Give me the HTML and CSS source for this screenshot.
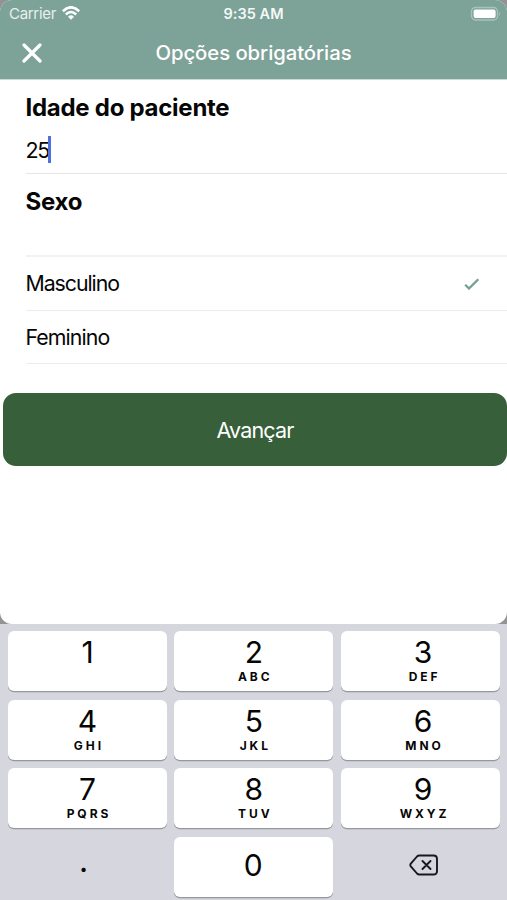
FILE: index.html
```html
<!DOCTYPE html>
<html lang="pt">
<head>
<meta charset="utf-8">
<title>Opções obrigatórias</title>
<link rel="stylesheet" href="styles.css">
</head>
<body>
<div class="screen">
  <header class="top">
    <div class="status">
      <div class="carrier"><span>Carrier</span>
        <svg class="wifi" viewBox="0 0 18 14" width="18" height="14"><g fill="none" stroke="#fff" stroke-width="2.600"><path d="M.8 5.200Q9-2.600 17.200 5.200"/><path d="M3.800 8.500Q9 3.500 14.200 8.500"/></g><path d="M6 10.700Q9 7.900 12 10.700L9 13.800Z" fill="#fff"/></svg>
      </div>
      <span class="time">9:35 AM</span>
      <svg class="battery" viewBox="0 0 32 16" width="32" height="16"><rect x="1.500" y="1.500" width="26" height="12.500" rx="4" fill="none" stroke="#a9c3bb" stroke-width="1.300"/><rect x="3.600" y="3.500" width="22" height="8.500" rx="2" fill="#fff"/><path d="M29.200 5.700q2 2 0 4z" fill="#a9c3bb"/></svg>
    </div>
    <div class="nav">
      <svg class="close" viewBox="0 0 20 20" width="20" height="20"><path d="M2 2 18 18M18 2 2 18" stroke="#fff" stroke-width="3.200" stroke-linecap="round"/></svg>
      <h1>Opções obrigatórias</h1>
    </div>
  </header>
  <main>
    <section class="age"><h2>Idade do paciente</h2><div class="field"><span>25</span><i class="caret"></i></div></section>
    <section class="sex"><h2>Sexo</h2></section>
    <div class="option"><span class="male">Masculino</span><svg viewBox="0 0 16 14" width="16" height="14"><path d="M1.200 8.800 5 12.500 14.300 3.300" fill="none" stroke="#759f92" stroke-width="2.300"/></svg></div>
    <div class="option"><span class="female">Feminino</span></div>
    <button class="next">Avançar</button>
  </main>
</div>
<div class="keypad">
  <div class="key"><b>1</b></div>
  <div class="key"><b>2</b><small>ABC</small></div>
  <div class="key right"><b>3</b><small>DEF</small></div>
  <div class="key"><b>4</b><small>GHI</small></div>
  <div class="key"><b>5</b><small>JKL</small></div>
  <div class="key right"><b>6</b><small>MNO</small></div>
  <div class="key"><b>7</b><small>PQRS</small></div>
  <div class="key"><b>8</b><small>TUV</small></div>
  <div class="key right"><b>9</b><small>WXYZ</small></div>
  <div class="key plain dot"><b>.</b></div>
  <div class="key zero"><b>0</b></div>
  <div class="key plain"><svg viewBox="0 0 30 22" width="30" height="22"><path d="M10.200 1.500H24.500Q28 1.500 28 5V17Q28 20.500 24.500 20.500H10.200Q9 20.500 8 19.500L1.800 12.400Q.8 11 1.800 9.600L8 2.500Q9 1.500 10.200 1.500ZM13.500 7 21.500 15M21.500 7 13.500 15" fill="none" stroke="#17181b" stroke-width="1.900" stroke-linejoin="round" stroke-linecap="round"/></svg></div>
</div>
</body>
</html>
```
FILE: styles.css
```css
* { box-sizing: border-box; }
body { margin: 0; width: 507px; height: 900px; overflow: hidden; background: #939393; font-family: Inter, "Liberation Sans", sans-serif; color: #060606; }
h1, h2 { margin: 0; white-space: nowrap; }
.screen { height: 624px; background: #fff; border-radius: 12px; overflow: hidden; }
.top { height: 80px; background: #7da298; color: #fff; border-bottom: 1px solid #c9d9d5; }
.status { height: 28px; display: grid; grid-template-columns: 1fr auto 1fr; align-items: center; padding: 0 5px 0 9px; }
.carrier { display: flex; align-items: center; gap: 6px; height: 26px; align-self: start; font-size: 15px; letter-spacing: -.3px; color: #e8f0ed; }
.wifi { margin-top: -1px; }
.time { height: 26px; align-self: start; line-height: 27px; margin-left: -4px; font-size: 14.500px; font-weight: 600; letter-spacing: .05px; color: #f4f8f6; }
.battery { justify-self: end; margin-top: -1px; }
.nav { height: 49px; display: grid; grid-template-columns: 42px 1fr 42px; align-items: center; }
.close { margin-left: 21.500px; }
.nav h1 { text-align: center; font-size: 20.300px; font-weight: 500; letter-spacing: -.05px; }
h2 { font-size: 24px; line-height: 30px; font-weight: 700; letter-spacing: -.27px; }
.age { height: 94px; margin-left: 26px; padding-top: 13px; border-bottom: 1px solid #e6e6e6; }
.age h2, .sex h2 { margin-left: -.500px; }
.field { display: flex; align-items: center; height: 27px; margin-top: 13px; font-size: 21.500px; letter-spacing: -1.300px; }
.field span { margin-left: -.500px; }
.caret { width: 3px; height: 27px; margin-left: -1px; background: #4c70dc; }
.sex { height: 83px; margin-left: 26px; padding-top: 13px; border-bottom: 2px solid #f2f2f2; }
.option { height: 53.700px; margin-left: 26px; padding-right: 27px; border-bottom: 1.500px solid #ececec; display: flex; align-items: center; justify-content: space-between; font-size: 21.300px; letter-spacing: -.9px; }
.option span { margin-left: -.500px; }
.male { letter-spacing: -1.050px; }
.next { display: block; width: 504px; height: 73px; margin: 29px 0 0 3px; padding: 0; border: 0; border-radius: 13px; background: #375f3a; color: #fff; font: 400 21.500px Inter, sans-serif; letter-spacing: -.85px; }
.keypad { height: 276px; background: #d5d6de; padding: 7px 7px 4px 8px; display: grid; grid-template-columns: repeat(3, 159px); grid-template-rows: repeat(4, 60px); column-gap: 7.300px; row-gap: 8.500px; }
.key { background: #fff; border-radius: 6px; box-shadow: 0 1.300px 0 #97989c; display: flex; flex-direction: column; align-items: center; padding-top: 3px; }
.key b { font-size: 30px; line-height: 36px; font-weight: 400; }
.key small { font-size: 12px; line-height: 14px; font-weight: 700; letter-spacing: 2.950px; margin-right: -2.950px; }
.right { padding-left: 6px; }
.zero { justify-content: center; padding: 0 1px 3px 0; }
.plain { background: none; box-shadow: none; justify-content: center; padding: 0 0 3px; }
.plain svg { margin-left: 7px; }
.dot { padding: 0 8px 8px 0; }
.dot b { font-size: 27px; font-weight: 600; }
```
